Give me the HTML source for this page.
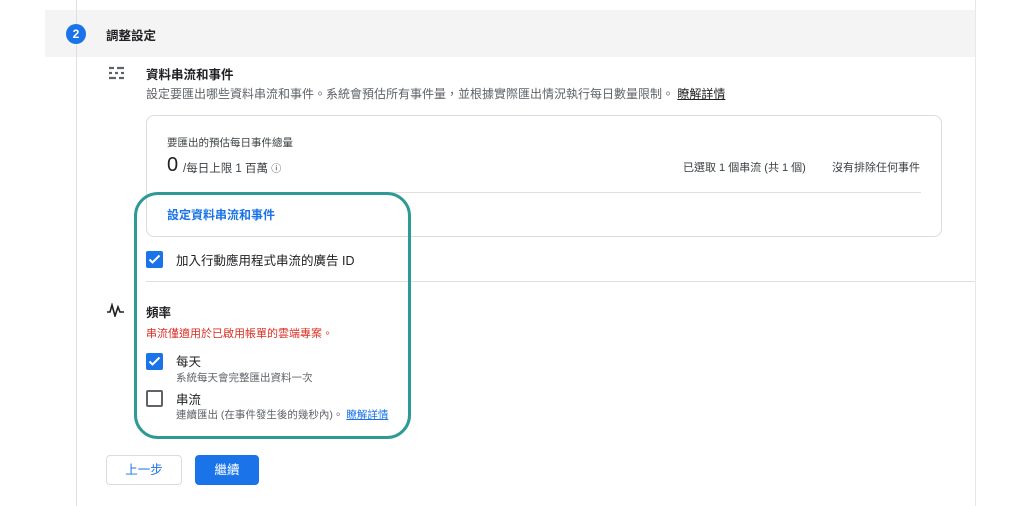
<!DOCTYPE html>
<html><head><meta charset="utf-8"><style>
*{margin:0;padding:0;box-sizing:border-box}
body{width:1024px;height:506px;background:#fff;position:relative;overflow:hidden;font-family:"Liberation Sans","Noto Sans CJK TC",sans-serif;color:#202124}
.a{position:absolute;white-space:nowrap}
.cb{position:absolute;width:17px;height:17px;border-radius:2px;background:#1a73e8}
.cb svg{position:absolute;left:1px;top:1px}
.ce{position:absolute;width:17px;height:17px;border-radius:2px;border:2px solid #5f6368}
</style></head><body>
<div class="a" style="left:45px;top:10px;width:930px;height:47px;background:#f4f4f4"></div>
<div class="a" style="left:76px;top:0;width:1px;height:506px;background:#e0e0e0"></div>
<div class="a" style="left:975px;top:0;width:1px;height:506px;background:#e8e8e8"></div>
<div class="a" style="left:66px;top:24px;width:20px;height:20px;border-radius:50%;background:#1a73e8;color:#fff;font-size:12px;text-align:center;line-height:20px;font-weight:bold">2</div>
<div class="a" style="left:106px;top:25px;font-size:12.5px;font-weight:bold">調整設定</div>
<svg class="a" style="left:108px;top:66px" width="18" height="16" viewBox="0 0 18 16"><g stroke="#5f6368" stroke-width="2.2"><path d="M1 2h5M9 2h7M1 7h3M7 7h3M13 7h3M1 12h7M11 12h5"/></g></svg>
<div class="a" style="left:146px;top:64px;font-size:12.5px;font-weight:bold">資料串流和事件</div>
<div class="a" style="left:146px;top:85px;font-size:12px;color:#5f6368">設定要匯出哪些資料串流和事件。系統會預估所有事件量，並根據實際匯出情況執行每日數量限制。 <span style="color:#202124;text-decoration:underline">瞭解詳情</span></div>
<div class="a" style="left:146px;top:115px;width:796px;height:122px;border:1px solid #dadce0;border-radius:8px"></div>
<div class="a" style="left:167px;top:135px;font-size:10.5px;color:#3c4043">要匯出的預估每日事件總量</div>
<div class="a" style="left:167px;top:154px;font-size:20px;color:#202124">0</div>
<div class="a" style="left:183px;top:160px;font-size:11.5px;color:#3c4043">/每日上限 1 百萬 <span style="font-size:10px">ⓘ</span></div>
<div class="a" style="left:683px;top:159px;font-size:11px;color:#3c4043">已選取 1 個串流 (共 1 個)</div>
<div class="a" style="left:832px;top:159px;font-size:11px;color:#3c4043">沒有排除任何事件</div>
<div class="a" style="left:167px;top:192px;width:754px;height:1px;background:#e0e0e0"></div>
<div class="a" style="left:167px;top:206px;font-size:12px;color:#1a73e8;font-weight:bold">設定資料串流和事件</div>
<div class="cb" style="left:146px;top:251px"><svg width="15" height="15" viewBox="0 0 15 15"><path d="M2.5 7.5l3 3 7-7" stroke="#fff" stroke-width="2" fill="none"/></svg></div>
<div class="a" style="left:176px;top:250px;font-size:12.5px">加入行動應用程式串流的廣告 ID</div>
<div class="a" style="left:146px;top:281px;width:829px;height:1px;background:#e0e0e0"></div>
<svg class="a" style="left:107px;top:303px" width="18" height="14" viewBox="0 0 18 14"><path d="M0 9h3l2-7 3 11 3-9 2 5h4" stroke="#202124" stroke-width="1.6" fill="none"/></svg>
<div class="a" style="left:146px;top:302px;font-size:12.5px;font-weight:bold">頻率</div>
<div class="a" style="left:146px;top:325px;font-size:11px;color:#d93025">串流僅適用於已啟用帳單的雲端專案。</div>
<div class="cb" style="left:146px;top:353px"><svg width="15" height="15" viewBox="0 0 15 15"><path d="M2.5 7.5l3 3 7-7" stroke="#fff" stroke-width="2" fill="none"/></svg></div>
<div class="a" style="left:176px;top:351px;font-size:12.5px">每天</div>
<div class="a" style="left:176px;top:370px;font-size:10.5px;color:#5f6368">系統每天會完整匯出資料一次</div>
<div class="ce" style="left:146px;top:390px"></div>
<div class="a" style="left:176px;top:389px;font-size:12.5px">串流</div>
<div class="a" style="left:176px;top:407px;font-size:10.5px;color:#5f6368">連續匯出 (在事件發生後的幾秒內)。 <span style="color:#1a73e8;text-decoration:underline">瞭解詳情</span></div>
<div class="a" style="left:134px;top:192px;width:277px;height:247px;border:3px solid #2e9a94;border-radius:24px"></div>
<div class="a" style="left:106px;top:455px;width:76px;height:30px;border:1px solid #dadce0;border-radius:4px;color:#1a73e8;font-size:12.5px;text-align:center;line-height:28px">上一步</div>
<div class="a" style="left:195px;top:455px;width:64px;height:30px;background:#1a73e8;border-radius:4px;color:#fff;font-size:12.5px;text-align:center;line-height:30px">繼續</div>
</body></html>
